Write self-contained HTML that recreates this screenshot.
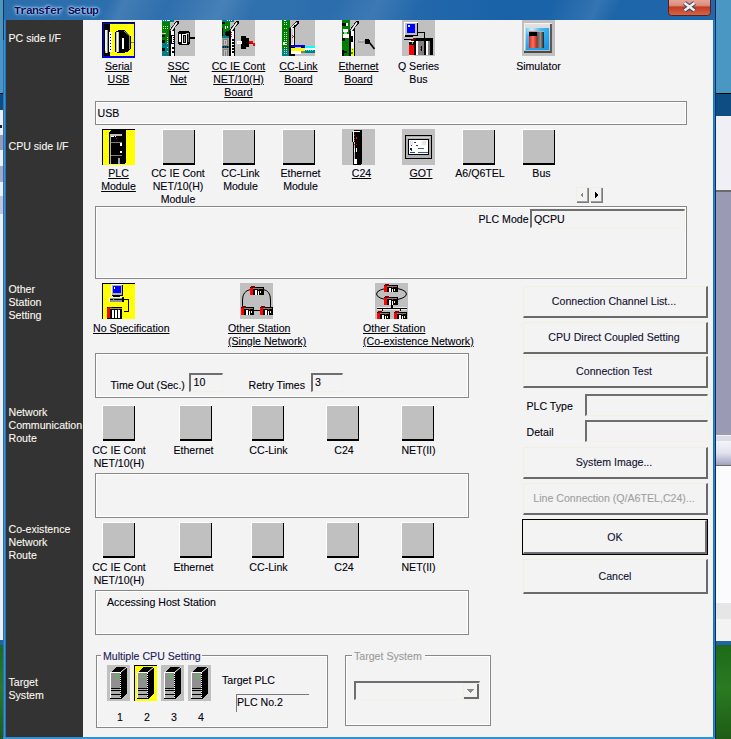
<!DOCTYPE html>
<html><head><meta charset="utf-8"><style>
html,body{margin:0;padding:0;width:731px;height:739px;overflow:hidden;background:#f3f3f3;}
.a{position:absolute;}
.t{position:absolute;font-family:"Liberation Sans",sans-serif;font-size:10.6px;line-height:13px;white-space:nowrap;color:#00000c;-webkit-text-stroke:0.1px currentColor;}
.t u{text-decoration:underline;text-decoration-color:#000;text-underline-offset:1px;}
.title{font-family:"Liberation Mono",monospace;font-size:11.5px;font-weight:bold;color:#0a0a58;line-height:14px;letter-spacing:-0.9px;text-shadow:0 0 1.5px #d8f0ff,0 0 3px #a8d8ff,0 0 4px #80c0f0;white-space:nowrap;}
svg{display:block;}
</style></head><body>
<div class="a" style="left:0px;top:0px;width:731px;height:739px;background:#f3f3f3;"></div>
<div class="a" style="left:716px;top:0px;width:15px;height:93px;background:#4a97c3;"></div>
<div class="a" style="left:716px;top:93px;width:15px;height:1px;background:#000;"></div>
<div class="a" style="left:716px;top:94px;width:15px;height:22px;background:#0e4c84;"></div>
<div class="a" style="left:716px;top:116px;width:15px;height:74px;background:#efeff5;"></div>
<div class="a" style="left:716px;top:190px;width:15px;height:2px;background:#6a6a6a;"></div>
<div class="a" style="left:716px;top:192px;width:15px;height:243px;background:#9a9ab4;"></div>
<div class="a" style="left:716px;top:435px;width:15px;height:1px;background:#f6f4e6;"></div>
<div class="a" style="left:716px;top:436px;width:15px;height:5px;background:#dcdce6;"></div>
<div class="a" style="left:716px;top:441px;width:15px;height:24px;background:linear-gradient(#f4f4fa,#e2e2ec 50%,#a2a2c0);"></div>
<div class="a" style="left:716px;top:465px;width:15px;height:1px;background:#6a6a6a;"></div>
<div class="a" style="left:716px;top:466px;width:15px;height:137px;background:#fbfbfd;"></div>
<div class="a" style="left:716px;top:603px;width:15px;height:16px;background:#e6e6e6;"></div>
<div class="a" style="left:716px;top:619px;width:15px;height:22px;background:#f3f3f3;"></div>
<div class="a" style="left:716px;top:641px;width:15px;height:4px;background:#2262a6;"></div>
<div class="a" style="left:716px;top:645px;width:15px;height:94px;background:linear-gradient(#1e6a18,#2a7a22 45%,#1e5c16);"></div>
<div class="a" style="left:0px;top:0px;width:3px;height:93px;background:#4a97c3;"></div>
<div class="a" style="left:0px;top:93px;width:3px;height:1px;background:#000;"></div>
<div class="a" style="left:0px;top:94px;width:3px;height:16px;background:#0e4c84;"></div>
<div class="a" style="left:0px;top:110px;width:3px;height:530px;background:#f0f0f4;"></div>
<div class="a" style="left:0px;top:125px;width:2px;height:3px;background:#202020;"></div>
<div class="a" style="left:0px;top:135px;width:3px;height:15px;background:#9a9ab4;"></div>
<div class="a" style="left:0px;top:166px;width:3px;height:16px;background:#a8a8c0;"></div>
<div class="a" style="left:0px;top:196px;width:3px;height:18px;background:#c4c4d6;"></div>
<div class="a" style="left:0px;top:640px;width:3px;height:5px;background:#2262a6;"></div>
<div class="a" style="left:0px;top:645px;width:3px;height:94px;background:linear-gradient(#1e6a18,#2a7a22 45%,#1e5c16);"></div>
<div class="a" style="left:3px;top:0px;width:3px;height:739px;background:linear-gradient(90deg,#1b64ae,#3a90d8,#1b64ae);"></div>
<div class="a" style="left:713px;top:0px;width:2px;height:739px;background:linear-gradient(90deg,#1b64ae,#14a0e0);"></div>
<div class="a" style="left:3px;top:737px;width:712px;height:2px;background:linear-gradient(#3a86c8,#22a0e0);"></div>
<div class="a" style="left:3px;top:0px;width:1px;height:40px;background:#1d3450;"></div>
<div class="a" style="left:715px;top:0px;width:1px;height:739px;background:#1a2460;"></div>
<div class="a" style="left:4px;top:0px;width:711px;height:20px;background:linear-gradient(115deg,rgba(255,255,255,0) 0px,rgba(255,255,255,0) 95px,rgba(255,255,255,.10) 110px,rgba(255,255,255,0) 150px,rgba(255,255,255,.12) 200px,rgba(255,255,255,0) 230px,rgba(255,255,255,0) 300px,rgba(255,255,255,.10) 340px,rgba(255,255,255,0) 380px,rgba(255,255,255,0) 500px,rgba(255,255,255,.10) 540px,rgba(255,255,255,0) 560px),linear-gradient(90deg,#2c6dac 0%,#2f70ae 40%,#1a62a8 70%,#2068aa 100%);"></div>
<div class="a title" style="left:14px;top:4px;">Transfer Setup</div>
<div class="a" style="left:668px;top:0px;"><svg width="43" height="17" viewBox="0 0 43 17"><defs><linearGradient id="cg" x1="0" y1="0" x2="0" y2="1"><stop offset="0" stop-color="#eab0a4"/><stop offset="0.45" stop-color="#dc8e7e"/><stop offset="0.55" stop-color="#c43c22"/><stop offset="1" stop-color="#d4684a"/></linearGradient></defs><rect x="0.5" y="-3" width="42" height="18.5" rx="3" fill="url(#cg)" stroke="#5a2020" stroke-width="1"/><path d="M16.5 3 L26.5 10.5 M26.5 3 L16.5 10.5" stroke="#3a4058" stroke-width="4.6" stroke-linecap="butt"/><path d="M16.5 3 L26.5 10.5 M26.5 3 L16.5 10.5" stroke="#f0f0f4" stroke-width="2.6" stroke-linecap="butt"/></svg></div>
<div class="a" style="left:6px;top:20px;width:77px;height:717px;background:#333333;"></div>
<div class="t" style="left:8.5px;top:32px;color:#fbf8f0;">PC side I/F</div>
<div class="t" style="left:8.5px;top:140px;color:#fbf8f0;">CPU side I/F</div>
<div class="t" style="left:8.5px;top:283px;color:#fbf8f0;">Other</div>
<div class="t" style="left:8.5px;top:296px;color:#fbf8f0;">Station</div>
<div class="t" style="left:8.5px;top:309px;color:#fbf8f0;">Setting</div>
<div class="t" style="left:8.5px;top:406px;color:#fbf8f0;">Network</div>
<div class="t" style="left:8.5px;top:419px;color:#fbf8f0;">Communication</div>
<div class="t" style="left:8.5px;top:432px;color:#fbf8f0;">Route</div>
<div class="t" style="left:8.5px;top:523px;color:#fbf8f0;">Co-existence</div>
<div class="t" style="left:8.5px;top:536px;color:#fbf8f0;">Network</div>
<div class="t" style="left:8.5px;top:549px;color:#fbf8f0;">Route</div>
<div class="t" style="left:8.5px;top:676px;color:#fbf8f0;">Target</div>
<div class="t" style="left:8.5px;top:689px;color:#fbf8f0;">System</div>
<div class="a" style="left:102px;top:22px;width:33px;height:36px;"><svg width="33" height="36" viewBox="0 0 33 36" shape-rendering="crispEdges"><rect x="0" y="0" width="33" height="36" fill="#000"/><rect x="1" y="1" width="32" height="35" fill="#0000ff"/><rect x="2" y="2" width="30" height="32" fill="#ffff00"/><rect x="2" y="2" width="6" height="32" fill="#000"/><rect x="3" y="8" width="3" height="23" fill="#f0f0f0"/><rect x="5" y="8" width="1" height="23" fill="#909090"/><rect x="3" y="29" width="1" height="2" fill="#c0c000"/><rect x="7" y="10" width="3" height="20" fill="#fff"/><rect x="6" y="11" width="1" height="18" fill="#000"/><rect x="8" y="12" width="1" height="1" fill="#000"/><rect x="8" y="15" width="1" height="1" fill="#000"/><rect x="8" y="18" width="1" height="1" fill="#000"/><rect x="8" y="21" width="1" height="1" fill="#000"/><rect x="8" y="24" width="1" height="1" fill="#000"/><rect x="8" y="27" width="1" height="1" fill="#000"/><path d="M13 10 L15 9 L17 8 L22 8 L29 14 L29 27 L25 30 L20 31 L17 31 L13 30Z" fill="#000"/><rect x="14" y="10" width="3" height="20" fill="#c0c0c0"/><rect x="15" y="10" width="1" height="20" fill="#fff"/><rect x="20" y="16" width="2" height="11" fill="#fff"/><path d="M22 9 L28 14" stroke="#b0b0b0" stroke-width="1" shape-rendering="auto"/><rect x="27" y="14" width="1" height="13" fill="#808080"/><rect x="29" y="20" width="3" height="1" fill="#808080"/></svg></div>
<div class="t" style="left:83.5px;top:60px;width:70px;text-align:center;"><u>Serial</u></div>
<div class="t" style="left:83.5px;top:73px;width:70px;text-align:center;"><u>USB</u></div>
<div class="a" style="left:162px;top:20px;width:33px;height:36px;"><svg width="33" height="36" viewBox="0 0 33 36" shape-rendering="crispEdges"><rect x="0" y="0" width="33" height="36" fill="#c0c0c0"/><rect x="0" y="0" width="8" height="14" fill="#008000"/><rect x="0" y="0" width="12" height="2" fill="#008080"/><rect x="1" y="0" width="1" height="1" fill="#fff"/><rect x="3" y="0" width="1" height="1" fill="#fff"/><rect x="5" y="0" width="3" height="1" fill="#fff"/><rect x="1" y="6" width="1" height="1" fill="#c8e0c8"/><rect x="3" y="6" width="1" height="1" fill="#c8e0c8"/><rect x="5" y="6" width="1" height="1" fill="#c8e0c8"/><rect x="1" y="8" width="1" height="1" fill="#c8e0c8"/><rect x="3" y="8" width="1" height="1" fill="#c8e0c8"/><rect x="5" y="8" width="1" height="1" fill="#c8e0c8"/><rect x="0" y="14" width="8" height="8" fill="#008000"/><rect x="0" y="22" width="8" height="14" fill="#008080"/><rect x="0" y="13" width="4" height="1" fill="#e0c0d0"/><rect x="0" y="15" width="3" height="2" fill="#000"/><rect x="0" y="20" width="3" height="3" fill="#000"/><rect x="0" y="28" width="3" height="3" fill="#000"/><rect x="5" y="17" width="1" height="1" fill="#c0e0c0"/><rect x="5" y="19" width="1" height="1" fill="#c0e0c0"/><rect x="5" y="21" width="1" height="1" fill="#c0e0c0"/><rect x="5" y="23" width="1" height="1" fill="#c0e0c0"/><rect x="5" y="27" width="1" height="1" fill="#c0e0c0"/><rect x="5" y="31" width="1" height="1" fill="#c0e0c0"/><path d="M7 11 L14 1 L17 1 L17 3 L13 8 L13 36 L7 36Z" fill="#000"/><path d="M9 11 L15 2.5" stroke="#fff" stroke-width="1.6" shape-rendering="auto"/><rect x="9" y="11" width="3" height="25" fill="#fff"/><rect x="8" y="11" width="1" height="25" fill="#000"/><rect x="12" y="8" width="1" height="28" fill="#000"/><rect x="9" y="15" width="4" height="9" fill="#000"/><rect x="10" y="16" width="2" height="7" fill="#fff"/><rect x="11" y="17" width="1" height="1" fill="#000"/><rect x="11" y="19" width="1" height="1" fill="#000"/><rect x="11" y="21" width="1" height="1" fill="#000"/><rect x="10" y="27" width="2" height="2" fill="#000"/><rect x="10" y="31" width="2" height="2" fill="#000"/><path d="M16 12 L18 11 L26 11 L28 13 L28 23 L26 25 L18 25 L16 24Z" fill="#000"/><rect x="17" y="14" width="2" height="8" fill="#fff"/><rect x="20" y="14" width="5" height="10" fill="#fff"/><rect x="21" y="15" width="3" height="8" fill="#000"/><rect x="22" y="16" width="1" height="6" fill="#909090"/><rect x="24" y="13" width="3" height="1" fill="#b0b0b0"/><rect x="26" y="14" width="1" height="8" fill="#707070"/><rect x="28" y="17" width="5" height="2" fill="#000"/></svg></div>
<div class="t" style="left:143.5px;top:60px;width:70px;text-align:center;"><u>SSC</u></div>
<div class="t" style="left:143.5px;top:73px;width:70px;text-align:center;"><u>Net</u></div>
<div class="a" style="left:222px;top:20px;width:33px;height:36px;"><svg width="33" height="36" viewBox="0 0 33 36" shape-rendering="crispEdges"><rect x="0" y="0" width="33" height="36" fill="#c0c0c0"/><rect x="0" y="0" width="12" height="2" fill="#008080"/><rect x="5" y="0" width="1" height="1" fill="#fff"/><rect x="7" y="0" width="1" height="1" fill="#fff"/><rect x="9" y="0" width="1" height="1" fill="#fff"/><rect x="0" y="2" width="8" height="15" fill="#008000"/><rect x="0" y="2" width="3" height="2" fill="#000"/><rect x="0" y="8" width="1" height="9" fill="#000"/><rect x="3" y="6" width="1" height="3" fill="#fff"/><rect x="5" y="6" width="1" height="2" fill="#fff"/><rect x="4" y="11" width="3" height="5" fill="#000"/><rect x="3" y="12" width="1" height="3" fill="#0000c0"/><rect x="0" y="16" width="8" height="2" fill="#008080"/><rect x="0" y="18" width="8" height="18" fill="#a0a0a0"/><rect x="1" y="19" width="5" height="7" fill="#808080"/><rect x="2" y="20" width="3" height="5" fill="#c0c0c0"/><rect x="3" y="21" width="1" height="3" fill="#808080"/><rect x="0" y="26" width="8" height="2" fill="#008000"/><rect x="1" y="26" width="1" height="2" fill="#0000c0"/><rect x="3" y="26" width="1" height="2" fill="#0000c0"/><rect x="5" y="26" width="1" height="2" fill="#0000c0"/><rect x="1" y="29" width="5" height="7" fill="#808080"/><rect x="2" y="30" width="3" height="6" fill="#c0c0c0"/><rect x="3" y="31" width="1" height="5" fill="#808080"/><path d="M7 11 L14 1 L17 1 L17 3 L13 8 L13 36 L7 36Z" fill="#000"/><path d="M9 11 L15 2.5" stroke="#fff" stroke-width="1.6" shape-rendering="auto"/><rect x="9" y="11" width="3" height="25" fill="#fff"/><rect x="8" y="11" width="1" height="25" fill="#000"/><rect x="12" y="8" width="1" height="28" fill="#000"/><rect x="9" y="12" width="1" height="1" fill="#ff0000"/><rect x="9" y="14" width="1" height="1" fill="#ff0000"/><rect x="9" y="16" width="1" height="1" fill="#ff0000"/><rect x="10" y="19" width="2" height="2" fill="#000"/><rect x="10" y="22" width="2" height="2" fill="#000"/><rect x="10" y="25" width="2" height="2" fill="#000"/><rect x="10" y="28" width="2" height="2" fill="#000"/><rect x="10" y="31" width="2" height="2" fill="#000"/><rect x="19" y="16" width="5" height="2" fill="#000"/><rect x="19" y="27" width="5" height="2" fill="#000"/><rect x="19" y="18" width="8" height="9" fill="#000"/><rect x="15" y="21" width="5" height="3" fill="#fff"/><rect x="16" y="22" width="3" height="1" fill="#e0e0e0"/><rect x="27" y="21" width="4" height="3" fill="#c00000"/><rect x="28" y="21" width="3" height="2" fill="#ff0000"/><rect x="31" y="23" width="2" height="3" fill="#ff0000"/></svg></div>
<div class="t" style="left:203.5px;top:60px;width:70px;text-align:center;"><u>CC IE Cont</u></div>
<div class="t" style="left:203.5px;top:73px;width:70px;text-align:center;"><u>NET/10(H)</u></div>
<div class="t" style="left:203.5px;top:86px;width:70px;text-align:center;"><u>Board</u></div>
<div class="a" style="left:282px;top:20px;width:33px;height:36px;"><svg width="33" height="36" viewBox="0 0 33 36" shape-rendering="crispEdges"><rect x="0" y="0" width="33" height="36" fill="#c0c0c0"/><rect x="0" y="0" width="8" height="36" fill="#008000"/><rect x="0" y="29" width="8" height="7" fill="#008080"/><rect x="1" y="0" width="6" height="1" fill="#008080"/><rect x="2" y="0" width="2" height="1" fill="#fff"/><rect x="2" y="2" width="1" height="1" fill="#c8e0c8"/><rect x="4" y="2" width="1" height="1" fill="#c8e0c8"/><rect x="2" y="4" width="1" height="1" fill="#c8e0c8"/><rect x="4" y="4" width="1" height="1" fill="#c8e0c8"/><rect x="2" y="8" width="1" height="1" fill="#c8e0c8"/><rect x="4" y="8" width="1" height="1" fill="#c8e0c8"/><rect x="2" y="12" width="1" height="1" fill="#c8e0c8"/><rect x="4" y="12" width="1" height="1" fill="#c8e0c8"/><rect x="2" y="14" width="1" height="1" fill="#c8e0c8"/><rect x="4" y="14" width="1" height="1" fill="#c8e0c8"/><rect x="2" y="16" width="1" height="1" fill="#c8e0c8"/><rect x="4" y="16" width="1" height="1" fill="#c8e0c8"/><rect x="2" y="18" width="1" height="1" fill="#c8e0c8"/><rect x="4" y="18" width="1" height="1" fill="#c8e0c8"/><rect x="2" y="20" width="1" height="1" fill="#c8e0c8"/><rect x="4" y="20" width="1" height="1" fill="#c8e0c8"/><rect x="2" y="27" width="1" height="1" fill="#c8e0c8"/><rect x="4" y="27" width="1" height="1" fill="#c8e0c8"/><rect x="2" y="29" width="1" height="1" fill="#c8e0c8"/><rect x="4" y="29" width="1" height="1" fill="#c8e0c8"/><rect x="2" y="31" width="1" height="1" fill="#c8e0c8"/><rect x="4" y="31" width="1" height="1" fill="#c8e0c8"/><rect x="2" y="33" width="1" height="1" fill="#c8e0c8"/><rect x="4" y="33" width="1" height="1" fill="#c8e0c8"/><rect x="1" y="22" width="4" height="3" fill="#fff"/><rect x="3" y="23" width="2" height="1" fill="#008000"/><path d="M7 8 L14 1 L17 1 L17 3 L13 7 L13 36 L7 36Z" fill="#000"/><path d="M9 8 L15 2.5" stroke="#fff" stroke-width="1.6" shape-rendering="auto"/><rect x="9" y="8" width="3" height="17" fill="#fff"/><rect x="9" y="9" width="2" height="15" fill="#d0d0d0"/><rect x="10" y="15" width="1" height="1" fill="#f00"/><rect x="10" y="17" width="1" height="1" fill="#f00"/><rect x="11" y="16" width="1" height="1" fill="#f00"/><rect x="12" y="5" width="1" height="31" fill="#000"/><rect x="9" y="25" width="14" height="2" fill="#0000ff"/><rect x="19" y="26" width="4" height="2" fill="#000080"/><rect x="9" y="28" width="14" height="3" fill="#ffff00"/><rect x="9" y="31" width="10" height="3" fill="#fff"/><rect x="19" y="31" width="4" height="2" fill="#808080"/><rect x="23" y="26" width="10" height="2" fill="#00ffff"/><rect x="23" y="28" width="10" height="2" fill="#fff"/><rect x="23" y="30" width="10" height="3" fill="#008080"/><rect x="24" y="30" width="1" height="1" fill="#00ffff"/><rect x="26" y="30" width="1" height="1" fill="#00ffff"/><rect x="28" y="30" width="1" height="1" fill="#00ffff"/><rect x="30" y="30" width="1" height="1" fill="#00ffff"/></svg></div>
<div class="t" style="left:263.5px;top:60px;width:70px;text-align:center;"><u>CC-Link</u></div>
<div class="t" style="left:263.5px;top:73px;width:70px;text-align:center;"><u>Board</u></div>
<div class="a" style="left:342px;top:20px;width:33px;height:36px;"><svg width="33" height="36" viewBox="0 0 33 36" shape-rendering="crispEdges"><rect x="0" y="0" width="33" height="36" fill="#c0c0c0"/><rect x="0" y="0" width="8" height="36" fill="#008000"/><rect x="0" y="3" width="4" height="3" fill="#000"/><rect x="4" y="3" width="2" height="3" fill="#fff"/><rect x="1" y="9" width="5" height="3" fill="#fff"/><rect x="2" y="12" width="3" height="2" fill="#a0d0a0"/><rect x="1" y="14" width="6" height="4" fill="#fff"/><rect x="0" y="18" width="3" height="3" fill="#000"/><rect x="0" y="30" width="2" height="6" fill="#000"/><rect x="2" y="31" width="3" height="2" fill="#000"/><path d="M7 11 L14 1 L17 1 L17 3 L13 8 L13 36 L7 36Z" fill="#000"/><path d="M9 11 L15 2.5" stroke="#fff" stroke-width="1.6" shape-rendering="auto"/><rect x="9" y="11" width="3" height="25" fill="#fff"/><rect x="8" y="11" width="1" height="25" fill="#000"/><rect x="12" y="8" width="1" height="28" fill="#000"/><rect x="9" y="16" width="2" height="6" fill="#000"/><rect x="9" y="28" width="3" height="8" fill="#ffff00"/><rect x="10" y="29" width="1" height="1" fill="#00a000"/><rect x="9" y="32" width="2" height="2" fill="#00c000"/><rect x="16" y="20" width="7" height="3" fill="#a0a0a0"/><rect x="17" y="20" width="5" height="1" fill="#d0d0d0"/><rect x="23" y="19" width="4" height="5" fill="#000"/><rect x="26" y="20" width="2" height="3" fill="#000"/><path d="M27 22 L32.5 29" stroke="#000" stroke-width="1.6" shape-rendering="auto"/></svg></div>
<div class="t" style="left:323.5px;top:60px;width:70px;text-align:center;"><u>Ethernet</u></div>
<div class="t" style="left:323.5px;top:73px;width:70px;text-align:center;"><u>Board</u></div>
<div class="a" style="left:402px;top:20px;width:33px;height:36px;"><svg width="33" height="36" viewBox="0 0 33 36" shape-rendering="crispEdges"><rect x="0" y="0" width="33" height="36" fill="#c0c0c0"/><rect x="2" y="2" width="14" height="14" fill="#fff"/><rect x="3" y="3" width="13" height="13" fill="#000"/><rect x="3" y="3" width="12" height="12" fill="#c0c0c0"/><rect x="5" y="4" width="8" height="9" fill="#0000ff"/><rect x="6" y="5" width="2" height="2" fill="#a0ffff"/><rect x="3" y="16" width="8" height="1" fill="#000"/><rect x="2" y="19" width="14" height="1" fill="#000"/><rect x="16" y="12" width="7" height="1" fill="#000"/><rect x="22" y="12" width="1" height="6" fill="#000"/><path d="M8 21 L11 18 L31 18 L28 21Z" fill="#000"/><path d="M8 21 L11 18 L14 18 L11 21Z" fill="#800000"/><rect x="7" y="21" width="5" height="15" fill="#fff"/><rect x="7" y="22" width="5" height="3" fill="#000"/><rect x="10" y="22" width="1" height="2" fill="#00ff00"/><rect x="7" y="25" width="5" height="10" fill="#ff0000"/><rect x="12" y="21" width="2" height="14" fill="#000"/><rect x="14" y="21" width="2" height="14" fill="#fff"/><rect x="16" y="21" width="6" height="14" fill="#808080"/><rect x="18" y="27" width="1" height="1" fill="#f00"/><rect x="18" y="29" width="1" height="1" fill="#f00"/><rect x="19" y="26" width="1" height="5" fill="#000"/><rect x="22" y="21" width="2" height="14" fill="#000"/><rect x="24" y="21" width="2" height="14" fill="#fff"/><rect x="26" y="21" width="2" height="14" fill="#808080"/><rect x="28" y="19" width="3" height="16" fill="#000"/></svg></div>
<div class="t" style="left:383.5px;top:60px;width:70px;text-align:center;">Q Series</div>
<div class="t" style="left:383.5px;top:73px;width:70px;text-align:center;">Bus</div>
<div class="a" style="left:522px;top:20px;width:33px;height:36px;"><svg width="33" height="36" viewBox="0 0 33 36" shape-rendering="crispEdges"><rect x="0" y="0" width="33" height="36" fill="#c0c0c0"/><defs><linearGradient id="sg" x1="0" y1="0" x2="0" y2="1"><stop offset="0" stop-color="#e4e4e4"/><stop offset="1" stop-color="#b4b4b4"/></linearGradient><radialGradient id="sb" cx="0.25" cy="0.05" r="1"><stop offset="0" stop-color="#c8f4ff"/><stop offset="0.35" stop-color="#48bcf8"/><stop offset="1" stop-color="#1a9ae8"/></radialGradient><linearGradient id="sr" x1="0" y1="0" x2="1" y2="0"><stop offset="0" stop-color="#d02818"/><stop offset="0.5" stop-color="#ff7060"/><stop offset="1" stop-color="#c82010"/></linearGradient><linearGradient id="sk" x1="0" y1="0" x2="1" y2="0"><stop offset="0" stop-color="#505050"/><stop offset="0.5" stop-color="#909090"/><stop offset="1" stop-color="#202020"/></linearGradient></defs><rect x="2" y="3" width="28" height="30" fill="url(#sg)"/><rect x="2" y="3" width="26" height="1" fill="#f4f4f4"/><rect x="2" y="3" width="1" height="27" fill="#f0f0f0"/><rect x="28" y="4" width="2" height="29" fill="#5a5a5a"/><rect x="2" y="31" width="27" height="2" fill="#4a4a4a"/><rect x="4" y="8" width="23" height="22" fill="url(#sb)"/><rect x="7" y="11" width="8" height="17" fill="url(#sr)"/><rect x="7" y="12" width="8" height="4" fill="#000"/><rect x="7" y="11" width="8" height="1" fill="#ff8070"/><rect x="15" y="11" width="7" height="17" fill="url(#sk)"/><rect x="15" y="11" width="7" height="1" fill="#b0b0b0"/></svg></div>
<div class="t" style="left:503.5px;top:60px;width:70px;text-align:center;">Simulator</div>
<div class="a" style="left:95px;top:101px;width:592px;height:24px;border:1px solid #888;box-sizing:border-box;"></div>
<div class="a" style="left:96px;top:102px;width:590px;height:22px;border:1px solid #fff;box-sizing:border-box;"></div>
<div class="t" style="left:97.5px;top:107px;">USB</div>
<div class="a" style="left:102px;top:129px;width:33px;height:36px;"><svg width="33" height="36" viewBox="0 0 33 36" shape-rendering="crispEdges"><rect x="0" y="0" width="33" height="36" fill="#000"/><rect x="1" y="1" width="32" height="35" fill="#ffff00"/><path d="M7 3 L9 1 L24 1 L24 33 L22 35 L7 35Z" fill="#000"/><rect x="8" y="5" width="1" height="30" fill="#b0b0b0"/><rect x="8" y="5" width="12" height="2" fill="#c0c0c0"/><rect x="9" y="7" width="3" height="1" fill="#fff"/><rect x="13" y="7" width="1" height="1" fill="#fff"/><rect x="14" y="9" width="1" height="1" fill="#f00"/><rect x="9" y="13" width="11" height="1" fill="#808080"/><rect x="18" y="14" width="2" height="3" fill="#fff"/><rect x="18" y="22" width="2" height="2" fill="#fff"/><rect x="9" y="26" width="11" height="1" fill="#808080"/><rect x="16" y="29" width="2" height="6" fill="#a0a0a0"/></svg></div>
<div class="t" style="left:83.5px;top:167px;width:70px;text-align:center;"><u>PLC</u></div>
<div class="t" style="left:83.5px;top:180px;width:70px;text-align:center;"><u>Module</u></div>
<div class="a" style="left:162px;top:129px;width:33px;height:36px;"><svg width="33" height="36" viewBox="0 0 33 36" shape-rendering="crispEdges"><rect x="0" y="0" width="33" height="36" fill="#fff"/><rect x="1" y="1" width="32" height="35" fill="#000"/><rect x="1" y="1" width="31" height="33" fill="#c0c0c0"/></svg></div>
<div class="t" style="left:143.0px;top:167px;width:70px;text-align:center;">CC IE Cont</div>
<div class="t" style="left:143.0px;top:180px;width:70px;text-align:center;">NET/10(H)</div>
<div class="t" style="left:143.0px;top:193px;width:70px;text-align:center;">Module</div>
<div class="a" style="left:222px;top:129px;width:33px;height:36px;"><svg width="33" height="36" viewBox="0 0 33 36" shape-rendering="crispEdges"><rect x="0" y="0" width="33" height="36" fill="#fff"/><rect x="1" y="1" width="32" height="35" fill="#000"/><rect x="1" y="1" width="31" height="33" fill="#c0c0c0"/></svg></div>
<div class="t" style="left:205.5px;top:167px;width:70px;text-align:center;">CC-Link</div>
<div class="t" style="left:205.5px;top:180px;width:70px;text-align:center;">Module</div>
<div class="a" style="left:282px;top:129px;width:33px;height:36px;"><svg width="33" height="36" viewBox="0 0 33 36" shape-rendering="crispEdges"><rect x="0" y="0" width="33" height="36" fill="#fff"/><rect x="1" y="1" width="32" height="35" fill="#000"/><rect x="1" y="1" width="31" height="33" fill="#c0c0c0"/></svg></div>
<div class="t" style="left:265.5px;top:167px;width:70px;text-align:center;">Ethernet</div>
<div class="t" style="left:265.5px;top:180px;width:70px;text-align:center;">Module</div>
<div class="a" style="left:342px;top:129px;width:33px;height:36px;"><svg width="33" height="36" viewBox="0 0 33 36" shape-rendering="crispEdges"><rect x="0" y="0" width="33" height="36" fill="#c0c0c0"/><path d="M10 3 L12 1 L20 1 L20 34 L18 36 L11 36 L11 13 L10 13Z" fill="#000"/><rect x="11" y="2" width="1" height="11" fill="#fff"/><rect x="12" y="2" width="6" height="1" fill="#fff"/><rect x="12" y="13" width="1" height="22" fill="#c0c0c0"/><rect x="12" y="6" width="1" height="1" fill="#f00"/><rect x="12" y="9" width="1" height="1" fill="#f00"/><rect x="12" y="11" width="1" height="1" fill="#f00"/><rect x="14" y="8" width="1" height="2" fill="#f00"/><rect x="12" y="15" width="1" height="1" fill="#f00"/><rect x="14" y="15" width="1" height="1" fill="#f00"/><rect x="12" y="19" width="1" height="4" fill="#fff"/><rect x="14" y="19" width="1" height="4" fill="#fff"/><rect x="12" y="30" width="3" height="5" fill="#fff"/></svg></div>
<div class="t" style="left:326.5px;top:167px;width:70px;text-align:center;"><u>C24</u></div>
<div class="a" style="left:402px;top:129px;width:33px;height:36px;"><svg width="33" height="36" viewBox="0 0 33 36" shape-rendering="crispEdges"><rect x="0" y="0" width="33" height="36" fill="#c0c0c0"/><rect x="3" y="6" width="27" height="24" fill="#000"/><rect x="4" y="7" width="25" height="22" fill="#b0b0b0"/><rect x="5" y="8" width="23" height="1" fill="#d0d0d0"/><rect x="6" y="10" width="21" height="16" fill="#000"/><rect x="7" y="11" width="19" height="14" fill="#fff"/><rect x="8" y="12" width="3" height="4" fill="#e0e8f0"/><rect x="20" y="12" width="4" height="4" fill="#e0e8f0"/><rect x="12" y="13" width="2" height="1" fill="#204080"/><rect x="9" y="16" width="1" height="1" fill="#204080"/><rect x="14" y="16" width="2" height="1" fill="#204080"/><rect x="8" y="19" width="2" height="2" fill="#102040"/><rect x="9" y="21" width="1" height="1" fill="#204080"/><rect x="16" y="19" width="6" height="1" fill="#506070"/><rect x="8" y="23" width="5" height="1" fill="#204880"/><rect x="16" y="23" width="10" height="1" fill="#306090"/></svg></div>
<div class="t" style="left:386.0px;top:167px;width:70px;text-align:center;"><u>GOT</u></div>
<div class="a" style="left:462px;top:129px;width:33px;height:36px;"><svg width="33" height="36" viewBox="0 0 33 36" shape-rendering="crispEdges"><rect x="0" y="0" width="33" height="36" fill="#fff"/><rect x="1" y="1" width="32" height="35" fill="#000"/><rect x="1" y="1" width="31" height="33" fill="#c0c0c0"/></svg></div>
<div class="t" style="left:445.0px;top:167px;width:70px;text-align:center;">A6/Q6TEL</div>
<div class="a" style="left:522px;top:129px;width:33px;height:36px;"><svg width="33" height="36" viewBox="0 0 33 36" shape-rendering="crispEdges"><rect x="0" y="0" width="33" height="36" fill="#fff"/><rect x="1" y="1" width="32" height="35" fill="#000"/><rect x="1" y="1" width="31" height="33" fill="#c0c0c0"/></svg></div>
<div class="t" style="left:506.5px;top:167px;width:70px;text-align:center;">Bus</div>
<div class="a" style="left:576px;top:187px;"><svg width="13" height="16" viewBox="0 0 13 16" shape-rendering="crispEdges"><rect x="0" y="0" width="13" height="16" fill="#f2efe0"/><rect x="1" y="1" width="12" height="15" fill="#7a7a7a"/><rect x="1" y="1" width="11" height="14" fill="#a0a0a0"/><rect x="1" y="1" width="10" height="13" fill="#f3f3f3"/><path d="M7 5 L4 8 L7 11Z" fill="#8a8a8a"/></svg></div>
<div class="a" style="left:590px;top:187px;"><svg width="13" height="16" viewBox="0 0 13 16" shape-rendering="crispEdges"><rect x="0" y="0" width="13" height="16" fill="#f2efe0"/><rect x="1" y="1" width="12" height="15" fill="#7a7a7a"/><rect x="1" y="1" width="11" height="14" fill="#a0a0a0"/><rect x="1" y="1" width="10" height="13" fill="#f3f3f3"/><path d="M5 4.5 L8.5 8 L5 11.5Z" fill="#000"/></svg></div>
<div class="a" style="left:95px;top:206px;width:592px;height:73px;border:1px solid #888;box-sizing:border-box;"></div>
<div class="a" style="left:96px;top:207px;width:590px;height:71px;border:1px solid #fff;box-sizing:border-box;"></div>
<div class="t" style="left:478.5px;top:213px;">PLC Mode</div>
<div class="a" style="left:530px;top:209px;width:155px;height:19px;border-top:2px solid #6e6e6e;border-left:2px solid #6e6e6e;border-bottom:1px solid #f4f1e4;border-right:1px solid #f4f1e4;box-sizing:border-box;"></div>
<div class="t" style="left:534px;top:213px;">QCPU</div>
<div class="a" style="left:102px;top:283px;width:33px;height:36px;"><svg width="33" height="36" viewBox="0 0 33 36" shape-rendering="crispEdges"><rect x="0" y="0" width="33" height="36" fill="#000"/><rect x="1" y="1" width="32" height="35" fill="#ffff00"/><rect x="9" y="1" width="12" height="12" fill="#fff"/><rect x="10" y="2" width="11" height="11" fill="#000"/><rect x="10" y="2" width="10" height="10" fill="#b0b0b0"/><rect x="11" y="3" width="8" height="7" fill="#0000ff"/><rect x="12" y="4" width="1" height="2" fill="#fff"/><rect x="11" y="12" width="7" height="2" fill="#000"/><rect x="7" y="14" width="14" height="5" fill="#fff"/><rect x="8" y="15" width="14" height="4" fill="#909090"/><rect x="8" y="16" width="12" height="1" fill="#000"/><rect x="11" y="16" width="1" height="1" fill="#00ff00"/><rect x="20" y="14" width="2" height="5" fill="#000"/><rect x="22" y="16" width="5" height="1" fill="#000"/><rect x="26" y="16" width="1" height="13" fill="#000"/><rect x="22" y="28" width="5" height="1" fill="#000"/><rect x="5" y="24" width="15" height="12" fill="#000"/><rect x="5" y="25" width="3" height="10" fill="#ff0000"/><rect x="6" y="24" width="4" height="1" fill="#a00000"/><rect x="8" y="25" width="12" height="1" fill="#909090"/><rect x="10" y="27" width="2" height="8" fill="#fff"/><rect x="13" y="27" width="2" height="8" fill="#fff"/><rect x="16" y="27" width="2" height="8" fill="#fff"/><rect x="16" y="26" width="1" height="1" fill="#f00"/></svg></div>
<div class="t" style="left:93px;top:322px;"><u>No Specification</u></div>
<div class="a" style="left:240px;top:283px;width:33px;height:36px;"><svg width="33" height="36" viewBox="0 0 33 36" shape-rendering="crispEdges"><rect x="0" y="0" width="33" height="36" fill="#c0c0c0"/><path d="M10.5 6.5 Q2.5 8 2.5 17 L2.5 24 M23.5 6.5 Q30.5 8 30.5 17 L30.5 24" stroke="#000" stroke-width="1" fill="none" shape-rendering="auto"/><rect x="13" y="27" width="8" height="1" fill="#000"/><rect x="10" y="4" width="14" height="8" fill="#000"/><rect x="10" y="5" width="3" height="7" fill="#ff0000"/><rect x="11" y="3" width="4" height="2" fill="#800000"/><rect x="13" y="5" width="10" height="1" fill="#808080"/><rect x="15" y="7" width="2" height="5" fill="#fff"/><rect x="18" y="6" width="1" height="1" fill="#f00"/><rect x="18" y="8" width="1" height="4" fill="#fff"/><rect x="20" y="8" width="1" height="2" fill="#ffff00"/><rect x="1" y="24" width="13" height="8" fill="#000"/><rect x="1" y="25" width="3" height="7" fill="#ff0000"/><rect x="2" y="23" width="4" height="2" fill="#800000"/><rect x="4" y="25" width="9" height="1" fill="#808080"/><rect x="6" y="27" width="2" height="5" fill="#fff"/><rect x="9" y="26" width="1" height="1" fill="#f00"/><rect x="9" y="28" width="1" height="4" fill="#fff"/><rect x="11" y="28" width="1" height="2" fill="#ffff00"/><rect x="20" y="24" width="13" height="8" fill="#000"/><rect x="20" y="25" width="3" height="7" fill="#ff0000"/><rect x="21" y="23" width="4" height="2" fill="#800000"/><rect x="23" y="25" width="9" height="1" fill="#808080"/><rect x="25" y="27" width="2" height="5" fill="#fff"/><rect x="28" y="26" width="1" height="1" fill="#f00"/><rect x="28" y="28" width="1" height="4" fill="#fff"/><rect x="30" y="28" width="1" height="2" fill="#ffff00"/></svg></div>
<div class="t" style="left:228px;top:322px;"><u>Other Station</u></div>
<div class="t" style="left:228px;top:335px;"><u>(Single Network)</u></div>
<div class="a" style="left:375px;top:283px;width:33px;height:36px;"><svg width="33" height="36" viewBox="0 0 33 36" shape-rendering="crispEdges"><rect x="0" y="0" width="33" height="36" fill="#c0c0c0"/><ellipse cx="16.5" cy="11" rx="15" ry="6" stroke="#000" stroke-width="1" fill="none" shape-rendering="auto"/><rect x="9" y="2" width="14" height="7" fill="#000"/><rect x="9" y="3" width="3" height="6" fill="#ff0000"/><rect x="10" y="1" width="4" height="2" fill="#800000"/><rect x="12" y="3" width="10" height="1" fill="#808080"/><rect x="14" y="5" width="2" height="4" fill="#fff"/><rect x="17" y="4" width="1" height="1" fill="#f00"/><rect x="17" y="6" width="1" height="3" fill="#fff"/><rect x="19" y="6" width="1" height="2" fill="#ffff00"/><rect x="9" y="14" width="14" height="8" fill="#000"/><rect x="9" y="15" width="3" height="7" fill="#ff0000"/><rect x="10" y="13" width="4" height="2" fill="#800000"/><rect x="12" y="15" width="10" height="1" fill="#808080"/><rect x="14" y="17" width="2" height="5" fill="#fff"/><rect x="17" y="16" width="1" height="1" fill="#f00"/><rect x="17" y="18" width="1" height="4" fill="#fff"/><rect x="19" y="18" width="1" height="2" fill="#ffff00"/><rect x="16" y="22" width="2" height="3" fill="#000"/><rect x="2" y="24" width="30" height="1" fill="#e8e8e8"/><rect x="2" y="25" width="30" height="1" fill="#000"/><rect x="2" y="26" width="30" height="1" fill="#e8e8e8"/><rect x="16" y="24" width="2" height="1" fill="#000"/><rect x="7" y="26" width="1" height="2" fill="#000"/><rect x="25" y="26" width="1" height="2" fill="#000"/><rect x="2" y="29" width="13" height="7" fill="#000"/><rect x="2" y="30" width="3" height="6" fill="#ff0000"/><rect x="3" y="28" width="4" height="2" fill="#800000"/><rect x="5" y="30" width="9" height="1" fill="#808080"/><rect x="7" y="32" width="2" height="4" fill="#fff"/><rect x="10" y="31" width="1" height="1" fill="#f00"/><rect x="10" y="33" width="1" height="3" fill="#fff"/><rect x="12" y="33" width="1" height="2" fill="#ffff00"/><rect x="19" y="29" width="13" height="7" fill="#000"/><rect x="19" y="30" width="3" height="6" fill="#ff0000"/><rect x="20" y="28" width="4" height="2" fill="#800000"/><rect x="22" y="30" width="9" height="1" fill="#808080"/><rect x="24" y="32" width="2" height="4" fill="#fff"/><rect x="27" y="31" width="1" height="1" fill="#f00"/><rect x="27" y="33" width="1" height="3" fill="#fff"/><rect x="29" y="33" width="1" height="2" fill="#ffff00"/></svg></div>
<div class="t" style="left:363px;top:322px;"><u>Other Station</u></div>
<div class="t" style="left:363px;top:335px;"><u>(Co-existence Network)</u></div>
<div class="a" style="left:95px;top:353px;width:374px;height:45px;border:1px solid #888;box-sizing:border-box;"></div>
<div class="a" style="left:96px;top:354px;width:372px;height:43px;border:1px solid #fff;box-sizing:border-box;"></div>
<div class="t" style="left:110.5px;top:379px;">Time Out (Sec.)</div>
<div class="a" style="left:189px;top:373px;width:34px;height:19px;border-top:2px solid #6e6e6e;border-left:2px solid #6e6e6e;border-bottom:1px solid #f4f1e4;border-right:1px solid #f4f1e4;box-sizing:border-box;"></div>
<div class="t" style="left:193.5px;top:376px;">10</div>
<div class="t" style="left:248.5px;top:379px;">Retry Times</div>
<div class="a" style="left:311px;top:373px;width:32px;height:19px;border-top:2px solid #6e6e6e;border-left:2px solid #6e6e6e;border-bottom:1px solid #f4f1e4;border-right:1px solid #f4f1e4;box-sizing:border-box;"></div>
<div class="t" style="left:315px;top:376px;">3</div>
<div class="a" style="left:102px;top:405px;width:33px;height:36px;"><svg width="33" height="36" viewBox="0 0 33 36" shape-rendering="crispEdges"><rect x="0" y="0" width="33" height="36" fill="#fff"/><rect x="1" y="1" width="32" height="35" fill="#000"/><rect x="1" y="1" width="31" height="33" fill="#c0c0c0"/></svg></div>
<div class="t" style="left:84.0px;top:444px;width:70px;text-align:center;">CC IE Cont</div>
<div class="t" style="left:84.0px;top:457px;width:70px;text-align:center;">NET/10(H)</div>
<div class="a" style="left:179px;top:405px;width:33px;height:36px;"><svg width="33" height="36" viewBox="0 0 33 36" shape-rendering="crispEdges"><rect x="0" y="0" width="33" height="36" fill="#fff"/><rect x="1" y="1" width="32" height="35" fill="#000"/><rect x="1" y="1" width="31" height="33" fill="#c0c0c0"/></svg></div>
<div class="t" style="left:158.5px;top:444px;width:70px;text-align:center;">Ethernet</div>
<div class="a" style="left:251px;top:405px;width:33px;height:36px;"><svg width="33" height="36" viewBox="0 0 33 36" shape-rendering="crispEdges"><rect x="0" y="0" width="33" height="36" fill="#fff"/><rect x="1" y="1" width="32" height="35" fill="#000"/><rect x="1" y="1" width="31" height="33" fill="#c0c0c0"/></svg></div>
<div class="t" style="left:233.5px;top:444px;width:70px;text-align:center;">CC-Link</div>
<div class="a" style="left:326px;top:405px;width:33px;height:36px;"><svg width="33" height="36" viewBox="0 0 33 36" shape-rendering="crispEdges"><rect x="0" y="0" width="33" height="36" fill="#fff"/><rect x="1" y="1" width="32" height="35" fill="#000"/><rect x="1" y="1" width="31" height="33" fill="#c0c0c0"/></svg></div>
<div class="t" style="left:309.0px;top:444px;width:70px;text-align:center;">C24</div>
<div class="a" style="left:401px;top:405px;width:33px;height:36px;"><svg width="33" height="36" viewBox="0 0 33 36" shape-rendering="crispEdges"><rect x="0" y="0" width="33" height="36" fill="#fff"/><rect x="1" y="1" width="32" height="35" fill="#000"/><rect x="1" y="1" width="31" height="33" fill="#c0c0c0"/></svg></div>
<div class="t" style="left:383.5px;top:444px;width:70px;text-align:center;">NET(II)</div>
<div class="a" style="left:102px;top:522px;width:33px;height:36px;"><svg width="33" height="36" viewBox="0 0 33 36" shape-rendering="crispEdges"><rect x="0" y="0" width="33" height="36" fill="#fff"/><rect x="1" y="1" width="32" height="35" fill="#000"/><rect x="1" y="1" width="31" height="33" fill="#c0c0c0"/></svg></div>
<div class="t" style="left:84.0px;top:561px;width:70px;text-align:center;">CC IE Cont</div>
<div class="t" style="left:84.0px;top:574px;width:70px;text-align:center;">NET/10(H)</div>
<div class="a" style="left:179px;top:522px;width:33px;height:36px;"><svg width="33" height="36" viewBox="0 0 33 36" shape-rendering="crispEdges"><rect x="0" y="0" width="33" height="36" fill="#fff"/><rect x="1" y="1" width="32" height="35" fill="#000"/><rect x="1" y="1" width="31" height="33" fill="#c0c0c0"/></svg></div>
<div class="t" style="left:158.5px;top:561px;width:70px;text-align:center;">Ethernet</div>
<div class="a" style="left:251px;top:522px;width:33px;height:36px;"><svg width="33" height="36" viewBox="0 0 33 36" shape-rendering="crispEdges"><rect x="0" y="0" width="33" height="36" fill="#fff"/><rect x="1" y="1" width="32" height="35" fill="#000"/><rect x="1" y="1" width="31" height="33" fill="#c0c0c0"/></svg></div>
<div class="t" style="left:233.5px;top:561px;width:70px;text-align:center;">CC-Link</div>
<div class="a" style="left:326px;top:522px;width:33px;height:36px;"><svg width="33" height="36" viewBox="0 0 33 36" shape-rendering="crispEdges"><rect x="0" y="0" width="33" height="36" fill="#fff"/><rect x="1" y="1" width="32" height="35" fill="#000"/><rect x="1" y="1" width="31" height="33" fill="#c0c0c0"/></svg></div>
<div class="t" style="left:309.0px;top:561px;width:70px;text-align:center;">C24</div>
<div class="a" style="left:401px;top:522px;width:33px;height:36px;"><svg width="33" height="36" viewBox="0 0 33 36" shape-rendering="crispEdges"><rect x="0" y="0" width="33" height="36" fill="#fff"/><rect x="1" y="1" width="32" height="35" fill="#000"/><rect x="1" y="1" width="31" height="33" fill="#c0c0c0"/></svg></div>
<div class="t" style="left:383.5px;top:561px;width:70px;text-align:center;">NET(II)</div>
<div class="a" style="left:95px;top:473px;width:374px;height:45px;border:1px solid #888;box-sizing:border-box;"></div>
<div class="a" style="left:96px;top:474px;width:372px;height:43px;border:1px solid #fff;box-sizing:border-box;"></div>
<div class="a" style="left:95px;top:590px;width:374px;height:45px;border:1px solid #888;box-sizing:border-box;"></div>
<div class="a" style="left:96px;top:591px;width:372px;height:43px;border:1px solid #fff;box-sizing:border-box;"></div>
<div class="t" style="left:107px;top:596px;">Accessing Host Station</div>
<div class="a" style="left:96px;top:655px;width:232px;height:73px;border:1px solid #888;box-sizing:border-box;"></div>
<div class="a" style="left:97px;top:656px;width:230px;height:71px;border:1px solid #fff;box-sizing:border-box;"></div>
<div class="a" style="left:101px;top:653px;width:101px;height:5px;background:#f3f3f3;"></div>
<div class="t" style="left:103px;top:650px;color:#1a1a58;">Multiple CPU Setting</div>
<div class="a" style="left:107px;top:665px;width:23px;height:36px;"><svg width="23" height="36" viewBox="0 0 23 36" shape-rendering="crispEdges"><rect x="0" y="0" width="23" height="36" fill="#c0c0c0"/><path d="M4 7 L9 2 L20 2 L20 28 L14 34 L4 34Z" fill="#000"/><rect x="3" y="7" width="11" height="27" fill="#fff"/><rect x="4" y="8" width="9" height="16" fill="#909090"/><rect x="4" y="24" width="9" height="9" fill="#b0b0b0"/><rect x="9" y="10" width="2" height="1" fill="#00ff00"/><rect x="9" y="12" width="2" height="1" fill="#00ff00"/><rect x="4" y="23" width="9" height="1" fill="#000"/><rect x="4" y="25" width="9" height="1" fill="#000"/><rect x="4" y="29" width="9" height="1" fill="#000"/><rect x="3" y="33" width="11" height="1" fill="#000"/><rect x="13" y="9" width="1" height="1" fill="#000"/><rect x="13" y="11" width="1" height="1" fill="#000"/><rect x="13" y="13" width="1" height="1" fill="#000"/><rect x="13" y="15" width="1" height="1" fill="#000"/><rect x="13" y="17" width="1" height="1" fill="#000"/><rect x="13" y="19" width="1" height="1" fill="#000"/><rect x="13" y="21" width="1" height="1" fill="#000"/><rect x="13" y="23" width="1" height="1" fill="#000"/><rect x="13" y="25" width="1" height="1" fill="#000"/><rect x="13" y="27" width="1" height="1" fill="#000"/><rect x="13" y="29" width="1" height="1" fill="#000"/><rect x="13" y="31" width="1" height="1" fill="#000"/><path d="M14 7 L20 2" stroke="#fff" stroke-width="1" shape-rendering="auto"/></svg></div>
<div class="t" style="left:110.0px;top:711px;width:20px;text-align:center;">1</div>
<div class="a" style="left:134px;top:665px;width:23px;height:36px;"><svg width="23" height="36" viewBox="0 0 23 36" shape-rendering="crispEdges"><rect x="0" y="0" width="23" height="36" fill="#000"/><rect x="1" y="1" width="22" height="35" fill="#ffff00"/><path d="M4 7 L9 2 L20 2 L20 28 L14 34 L4 34Z" fill="#000"/><rect x="3" y="7" width="11" height="27" fill="#fff"/><rect x="4" y="8" width="9" height="16" fill="#909090"/><rect x="4" y="24" width="9" height="9" fill="#b0b0b0"/><rect x="9" y="10" width="2" height="1" fill="#00ff00"/><rect x="9" y="12" width="2" height="1" fill="#00ff00"/><rect x="4" y="23" width="9" height="1" fill="#000"/><rect x="4" y="25" width="9" height="1" fill="#000"/><rect x="4" y="29" width="9" height="1" fill="#000"/><rect x="3" y="33" width="11" height="1" fill="#000"/><rect x="13" y="9" width="1" height="1" fill="#000"/><rect x="13" y="11" width="1" height="1" fill="#000"/><rect x="13" y="13" width="1" height="1" fill="#000"/><rect x="13" y="15" width="1" height="1" fill="#000"/><rect x="13" y="17" width="1" height="1" fill="#000"/><rect x="13" y="19" width="1" height="1" fill="#000"/><rect x="13" y="21" width="1" height="1" fill="#000"/><rect x="13" y="23" width="1" height="1" fill="#000"/><rect x="13" y="25" width="1" height="1" fill="#000"/><rect x="13" y="27" width="1" height="1" fill="#000"/><rect x="13" y="29" width="1" height="1" fill="#000"/><rect x="13" y="31" width="1" height="1" fill="#000"/><path d="M14 7 L20 2" stroke="#fff" stroke-width="1" shape-rendering="auto"/></svg></div>
<div class="t" style="left:137.0px;top:711px;width:20px;text-align:center;">2</div>
<div class="a" style="left:161px;top:665px;width:23px;height:36px;"><svg width="23" height="36" viewBox="0 0 23 36" shape-rendering="crispEdges"><rect x="0" y="0" width="23" height="36" fill="#c0c0c0"/><path d="M4 7 L9 2 L20 2 L20 28 L14 34 L4 34Z" fill="#000"/><rect x="3" y="7" width="11" height="27" fill="#fff"/><rect x="4" y="8" width="9" height="16" fill="#909090"/><rect x="4" y="24" width="9" height="9" fill="#b0b0b0"/><rect x="9" y="10" width="2" height="1" fill="#00ff00"/><rect x="9" y="12" width="2" height="1" fill="#00ff00"/><rect x="4" y="23" width="9" height="1" fill="#000"/><rect x="4" y="25" width="9" height="1" fill="#000"/><rect x="4" y="29" width="9" height="1" fill="#000"/><rect x="3" y="33" width="11" height="1" fill="#000"/><rect x="13" y="9" width="1" height="1" fill="#000"/><rect x="13" y="11" width="1" height="1" fill="#000"/><rect x="13" y="13" width="1" height="1" fill="#000"/><rect x="13" y="15" width="1" height="1" fill="#000"/><rect x="13" y="17" width="1" height="1" fill="#000"/><rect x="13" y="19" width="1" height="1" fill="#000"/><rect x="13" y="21" width="1" height="1" fill="#000"/><rect x="13" y="23" width="1" height="1" fill="#000"/><rect x="13" y="25" width="1" height="1" fill="#000"/><rect x="13" y="27" width="1" height="1" fill="#000"/><rect x="13" y="29" width="1" height="1" fill="#000"/><rect x="13" y="31" width="1" height="1" fill="#000"/><path d="M14 7 L20 2" stroke="#fff" stroke-width="1" shape-rendering="auto"/></svg></div>
<div class="t" style="left:164.0px;top:711px;width:20px;text-align:center;">3</div>
<div class="a" style="left:188px;top:665px;width:23px;height:36px;"><svg width="23" height="36" viewBox="0 0 23 36" shape-rendering="crispEdges"><rect x="0" y="0" width="23" height="36" fill="#c0c0c0"/><path d="M4 7 L9 2 L20 2 L20 28 L14 34 L4 34Z" fill="#000"/><rect x="3" y="7" width="11" height="27" fill="#fff"/><rect x="4" y="8" width="9" height="16" fill="#909090"/><rect x="4" y="24" width="9" height="9" fill="#b0b0b0"/><rect x="9" y="10" width="2" height="1" fill="#00ff00"/><rect x="9" y="12" width="2" height="1" fill="#00ff00"/><rect x="4" y="23" width="9" height="1" fill="#000"/><rect x="4" y="25" width="9" height="1" fill="#000"/><rect x="4" y="29" width="9" height="1" fill="#000"/><rect x="3" y="33" width="11" height="1" fill="#000"/><rect x="13" y="9" width="1" height="1" fill="#000"/><rect x="13" y="11" width="1" height="1" fill="#000"/><rect x="13" y="13" width="1" height="1" fill="#000"/><rect x="13" y="15" width="1" height="1" fill="#000"/><rect x="13" y="17" width="1" height="1" fill="#000"/><rect x="13" y="19" width="1" height="1" fill="#000"/><rect x="13" y="21" width="1" height="1" fill="#000"/><rect x="13" y="23" width="1" height="1" fill="#000"/><rect x="13" y="25" width="1" height="1" fill="#000"/><rect x="13" y="27" width="1" height="1" fill="#000"/><rect x="13" y="29" width="1" height="1" fill="#000"/><rect x="13" y="31" width="1" height="1" fill="#000"/><path d="M14 7 L20 2" stroke="#fff" stroke-width="1" shape-rendering="auto"/></svg></div>
<div class="t" style="left:191.0px;top:711px;width:20px;text-align:center;">4</div>
<div class="t" style="left:222px;top:674px;">Target PLC</div>
<div class="a" style="left:236px;top:694px;width:73px;height:1px;background:#7a7a7a;"></div>
<div class="a" style="left:236px;top:694px;width:1px;height:18px;background:#7a7a7a;"></div>
<div class="t" style="left:237px;top:696px;">PLC No.2</div>
<div class="a" style="left:345px;top:655px;width:146px;height:71px;border:1px solid #888;box-sizing:border-box;"></div>
<div class="a" style="left:346px;top:656px;width:144px;height:69px;border:1px solid #fff;box-sizing:border-box;"></div>
<div class="a" style="left:352px;top:653px;width:73px;height:5px;background:#f3f3f3;"></div>
<div class="t" style="left:354px;top:650px;color:#9a9a9a;">Target System</div>
<div class="a" style="left:354px;top:681px;width:126px;height:19px;border-top:2px solid #6e6e6e;border-left:2px solid #6e6e6e;border-bottom:1px solid #f4f1e4;border-right:1px solid #f4f1e4;box-sizing:border-box;"></div>
<div class="a" style="left:463px;top:683px;"><svg width="16" height="16" viewBox="0 0 16 16" shape-rendering="crispEdges"><rect x="0" y="0" width="16" height="16" fill="#f2efe0"/><rect x="1" y="1" width="15" height="15" fill="#6a6a6a"/><rect x="1" y="1" width="13" height="13" fill="#f3f3f3"/><path d="M4 6 L11 6 L7.5 10Z" fill="#8a8a8a"/></svg></div>
<div class="a" style="left:523px;top:286px;width:185px;height:32px;border-top:1px solid #f2efe0;border-left:1px solid #f2efe0;border-bottom:2px solid #6a6a6a;border-right:2px solid #6a6a6a;box-sizing:border-box;"></div>
<div class="t" style="left:521.5px;top:295.0px;width:185px;text-align:center;color:#101030;">Connection Channel List...</div>
<div class="a" style="left:523px;top:322px;width:185px;height:32px;border-top:1px solid #f2efe0;border-left:1px solid #f2efe0;border-bottom:2px solid #6a6a6a;border-right:2px solid #6a6a6a;box-sizing:border-box;"></div>
<div class="t" style="left:521.5px;top:331.0px;width:185px;text-align:center;color:#101030;">CPU Direct Coupled Setting</div>
<div class="a" style="left:523px;top:356px;width:185px;height:32px;border-top:1px solid #f2efe0;border-left:1px solid #f2efe0;border-bottom:2px solid #6a6a6a;border-right:2px solid #6a6a6a;box-sizing:border-box;"></div>
<div class="t" style="left:521.5px;top:365.0px;width:185px;text-align:center;color:#101030;">Connection Test</div>
<div class="t" style="left:526.5px;top:400px;">PLC Type</div>
<div class="a" style="left:585px;top:394px;width:123px;height:22px;border-top:2px solid #6e6e6e;border-left:2px solid #6e6e6e;border-bottom:1px solid #f4f1e4;border-right:1px solid #f4f1e4;box-sizing:border-box;"></div>
<div class="t" style="left:526.5px;top:425.5px;">Detail</div>
<div class="a" style="left:585px;top:420px;width:123px;height:22px;border-top:2px solid #6e6e6e;border-left:2px solid #6e6e6e;border-bottom:1px solid #f4f1e4;border-right:1px solid #f4f1e4;box-sizing:border-box;"></div>
<div class="a" style="left:523px;top:447px;width:185px;height:32px;border-top:1px solid #f2efe0;border-left:1px solid #f2efe0;border-bottom:2px solid #6a6a6a;border-right:2px solid #6a6a6a;box-sizing:border-box;"></div>
<div class="t" style="left:521.5px;top:456.0px;width:185px;text-align:center;color:#101030;">System Image...</div>
<div class="a" style="left:523px;top:483px;width:185px;height:32px;border-top:1px solid #f2efe0;border-left:1px solid #f2efe0;border-bottom:2px solid #6a6a6a;border-right:2px solid #6a6a6a;box-sizing:border-box;"></div>
<div class="t" style="left:521.5px;top:492.0px;width:185px;text-align:center;color:#a0a0a0;">Line Connection (Q/A6TEL,C24)...</div>
<div class="a" style="left:522px;top:519px;width:186px;height:36px;border:1px solid #000;box-sizing:border-box;"></div>
<div class="a" style="left:523px;top:520px;width:184px;height:34px;border-top:1px solid #f6f3e6;border-left:1px solid #f6f3e6;border-bottom:2px solid #707070;border-right:2px solid #707070;box-sizing:border-box;"></div>
<div class="t" style="left:522.0px;top:531.0px;width:186px;text-align:center;color:#101030;">OK</div>
<div class="a" style="left:523px;top:559px;width:185px;height:35px;border-top:1px solid #f2efe0;border-left:1px solid #f2efe0;border-bottom:2px solid #6a6a6a;border-right:2px solid #6a6a6a;box-sizing:border-box;"></div>
<div class="t" style="left:522.5px;top:569.5px;width:185px;text-align:center;color:#101030;">Cancel</div>
</body></html>
